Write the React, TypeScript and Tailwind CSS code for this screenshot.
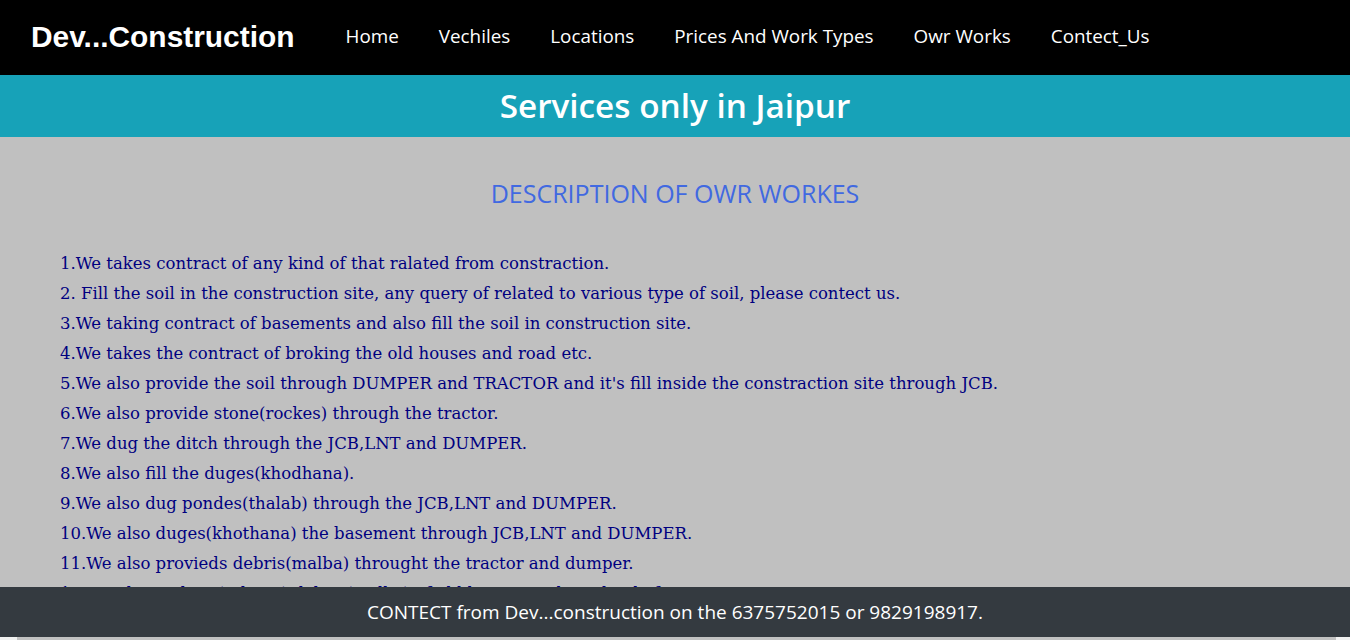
import React from "react";

const items = [
  "1.We takes contract of any kind of that ralated from constraction.",
  "2. Fill the soil in the construction site, any query of related to various type of soil, please contect us.",
  "3.We taking contract of basements and also fill the soil in construction site.",
  "4.We takes the contract of broking the old houses and road etc.",
  "5.We also provide the soil through DUMPER and TRACTOR and it's fill inside the constraction site through JCB.",
  "6.We also provide stone(rockes) through the tractor.",
  "7.We dug the ditch through the JCB,LNT and DUMPER.",
  "8.We also fill the duges(khodhana).",
  "9.We also dug pondes(thalab) through the JCB,LNT and DUMPER.",
  "10.We also duges(khothana) the basement through JCB,LNT and DUMPER.",
  "11.We also provieds debris(malba) throught the tractor and dumper.",
  "12.We also pick up(uthana) debris(malba) of old houses and any kind of waste.",
];

const nav = ["Home", "Vechiles", "Locations", "Prices And Work Types", "Owr Works", "Contect_Us"];

export default function App() {
  return (
    <div className="min-h-[640px] bg-[#c0c0c0] font-['Open_Sans',sans-serif]">
      <header className="flex h-[75px] items-center bg-black pl-[31px]">
        <div className="font-['Liberation_Sans',Arial,sans-serif] text-[29.9px] font-bold text-white">
          Dev...Construction
        </div>
        <nav className="ml-[51px] flex gap-[40px] pb-[2px]">
          {nav.map((n) => (
            <span key={n} className="text-[18.85px] text-white">
              {n}
            </span>
          ))}
        </nav>
      </header>
      <div className="flex h-[62px] items-center justify-center bg-[#17a2b8]">
        <h1 className="text-[33.3px] font-semibold text-white">Services only in Jaipur</h1>
      </div>
      <main className="pb-[80px]">
        <h2 className="pt-[40px] text-center text-[25px] font-medium leading-[33px] text-[#4169e1]">DESCRIPTION OF OWR WORKES</h2>
        <ul className="mt-[39px] pl-[60px] font-['DejaVu_Serif',serif] text-[16.5px] text-[#000080]">
          {items.map((t) => (
            <li key={t} className="h-[30px] whitespace-nowrap leading-[30px]">
              {t}
            </li>
          ))}
        </ul>
      </main>
      <div className="fixed bottom-0 left-0 right-0">
        <footer className="flex h-[50px] items-center justify-center bg-[#343a40]">
          <span className="text-[19px] text-white">CONTECT from Dev...construction on the 6375752015 or 9829198917.</span>
        </footer>
        <div className="flex h-[3px] bg-[#f1f1f1] pl-[17px] pr-[14px]">
          <div className="h-full flex-1 bg-[#c1c1c1]" />
        </div>
      </div>
    </div>
  );
}
